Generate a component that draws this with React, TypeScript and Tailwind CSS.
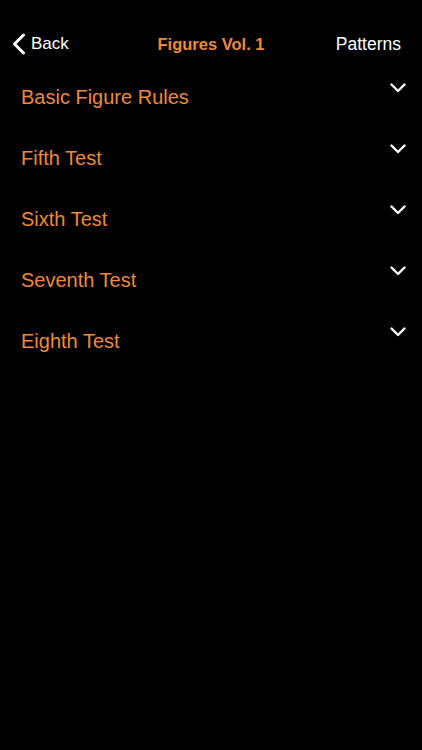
const SECTIONS = ["Basic Figure Rules", "Fifth Test", "Sixth Test", "Seventh Test", "Eighth Test"];

function ChevronDown() {
  return (
    <svg width="16" height="10" viewBox="0 0 16 10" fill="none" className="block">
      <path d="M1.5 1.5 L8 8 L14.5 1.5" stroke="white" strokeWidth="2.4" strokeLinecap="round" strokeLinejoin="round" />
    </svg>
  );
}

function ChevronLeft() {
  return (
    <svg width="14" height="22" viewBox="0 0 14 22" fill="none" className="block">
      <path d="M11.5 2 L2.5 11 L11.5 20" stroke="white" strokeWidth="3" strokeLinecap="round" strokeLinejoin="round" />
    </svg>
  );
}

export default function App() {
  return (
    <div className="min-h-[750px] w-[422px] bg-black font-['Liberation_Sans',Arial,sans-serif]">
      {/* nav bar */}
      <header className="relative flex h-[66px] items-start justify-between pl-[12px] pr-[21px] pt-[31px]">
        <button className="flex h-[26px] items-center gap-[5px] text-[17px] text-white">
          <ChevronLeft />
          <span>Back</span>
        </button>
        <h1 className="absolute left-1/2 top-[31px] h-[26px] -translate-x-1/2 text-[16.5px] font-bold leading-[26px] text-[#ee8a3a]">
          Figures Vol. 1
        </h1>
        <button className="h-[26px] text-[17.5px] leading-[26px] text-white">Patterns</button>
      </header>

      <ul>
        {SECTIONS.map((title) => (
          <li key={title} className="flex h-[61px] items-start justify-between pl-[21px] pr-[16px]">
            <span className="pt-[19px] text-[20px] leading-[24px] text-[#ee8a3a]">{title}</span>
            <span className="pt-[17px]">
              <ChevronDown />
            </span>
          </li>
        ))}
      </ul>
    </div>
  );
}
